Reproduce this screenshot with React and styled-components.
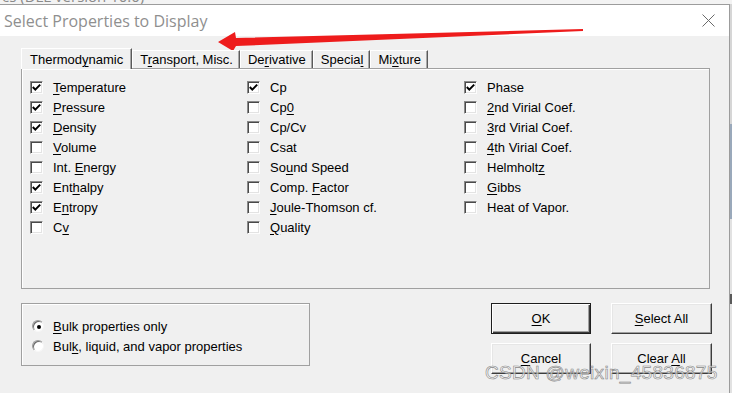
import styled, { createGlobalStyle } from 'styled-components';

const GlobalStyle = createGlobalStyle`
  body {
    margin: 0;
    background: #f0f0f0;
    font-family: "Liberation Sans", Arial, sans-serif;
  }
`;

const Screen = styled.div`
  position: relative;
  width: 732px;
  height: 393px;
  overflow: hidden;
  display: flex;
  flex-direction: column;
  background: #ededed;
`;

const BehindTitle = styled.div`
  height: 4px;
  overflow: hidden;
  padding-left: 2px;
  background: #f3f3f3;
  font-family: "Open Sans", sans-serif;
  font-size: 15px;
  line-height: 20px;
  color: #8a8a8a;
  span {
    display: block;
    margin-top: -14px;
  }
`;

const Main = styled.div`
  flex: 1;
  display: flex;
`;

const Dialog = styled.div`
  width: 729px;
  border-top: 1px solid #9c9c9c;
  border-right: 1px solid #9c9c9c;
  background: #f0f0f0;
  display: flex;
  flex-direction: column;
`;

const Outside = styled.div`
  flex: 1;
  background: linear-gradient(
    to bottom,
    #d6d6d6 0 120px,
    #9aa9bb 120px 215px,
    #e2e2e2 215px 290px,
    #5a5a5a 290px 300px,
    #e2e2e2 300px
  );
`;

const TitleBar = styled.div`
  height: 31px;
  background: #fff;
  display: flex;
  align-items: center;
  justify-content: space-between;
  padding: 0 14px 0 4px;
`;

const Title = styled.div`
  font-family: "Open Sans", sans-serif;
  font-size: 16px;
  color: #8f8f8f;
  margin-top: 1px;
`;

const Body = styled.div`
  padding: 12px 19px 0 21px;
`;

const TabStrip = styled.div`
  display: flex;
  align-items: flex-end;
  height: 20px;
  position: relative;
  z-index: 1;
`;

const Tab = styled.div`
  box-sizing: border-box;
  height: ${(p) => (p.$active ? '21px' : '18px')};
  margin-bottom: ${(p) => (p.$active ? '-1px' : '0')};
  padding: ${(p) => (p.$active ? '3px 8px 0 8px' : '1px 6px 0 7px')};
  background: #f0f0f0;
  border-top: 1px solid #fff;
  border-left: 1px solid #fff;
  border-right: 1px solid #5a5a5a;
  box-shadow: inset -1px 0 #a8a8a8;
  font-size: 13px;
  line-height: 15px;
  color: #000;
  white-space: nowrap;
`;

const Key = styled.span`
  text-decoration: underline;
  text-underline-offset: 2px;
`;

const Panel = styled.div`
  box-sizing: border-box;
  height: 221px;
  border: 1px solid #a0a0a0;
  box-shadow: inset 1px 1px #fff;
  display: grid;
  grid-auto-flow: column;
  grid-template-columns: 217px 217px 1fr;
  grid-template-rows: repeat(8, 20px);
  padding: 8px 0 0 8px;
`;

const CheckRow = styled.label`
  display: flex;
  align-items: center;
  gap: 10px;
  font-size: 13px;
  color: #000;
  white-space: nowrap;
`;

const Box = styled.span`
  box-sizing: border-box;
  width: 13px;
  height: 13px;
  background: #fff;
  border: 1px solid;
  border-color: #8a8a8a #fdfdfd #fdfdfd #8a8a8a;
  box-shadow: inset 1px 1px #4a4a4a, inset -1px -1px #e3e3e3;
  display: flex;
  align-items: center;
  justify-content: center;
`;

const BottomRow = styled.div`
  display: flex;
  justify-content: space-between;
  align-items: flex-start;
  margin-top: 14px;
  margin-right: -2px;
`;

const GroupBox = styled.div`
  box-sizing: border-box;
  width: 289px;
  height: 63px;
  border: 1px solid #a0a0a0;
  box-shadow: inset 1px 1px #fff;
  padding: 12px 0 0 10px;
`;

const RadioRow = styled.label`
  display: flex;
  align-items: center;
  gap: 9px;
  height: 20px;
  font-size: 13px;
  color: #000;
  white-space: nowrap;
`;

const Radio = styled.span`
  box-sizing: border-box;
  width: 12px;
  height: 12px;
  border-radius: 50%;
  background: #fff;
  border: 1px solid;
  border-color: #9a9a9a #f6f6f6 #f6f6f6 #9a9a9a;
  box-shadow: inset 1px 1px #6a6a6a;
  display: flex;
  align-items: center;
  justify-content: center;
  &::after {
    content: '';
    width: 4px;
    height: 4px;
    border-radius: 50%;
    background: ${(p) => (p.$on ? '#000' : 'transparent')};
    margin: 1px 0 0 1px;
  }
`;

const ButtonGrid = styled.div`
  display: grid;
  grid-template-columns: 100px 101px;
  grid-auto-rows: 31px;
  column-gap: 20px;
  row-gap: 9px;
`;

const Button = styled.button`
  box-sizing: border-box;
  background: #f0f0f0;
  font-family: "Liberation Sans", Arial, sans-serif;
  font-size: 13px;
  color: #000;
  padding: 0;
  border: 1px solid;
  border-color: ${(p) => (p.$default ? '#1e1e1e' : '#fff #3c3c3c #3c3c3c #fff')};
  box-shadow: ${(p) =>
    p.$default
      ? 'inset 1px 1px #fff, inset -1px -1px #3c3c3c, inset -2px -2px #a0a0a0'
      : 'inset -1px -1px #a0a0a0, inset 1px 1px #e6e6e6'};
`;

const Watermark = styled.div`
  position: absolute;
  left: 485px;
  top: 362px;
  font-family: "Liberation Sans", Arial, sans-serif;
  font-size: 19px;
  letter-spacing: 0.3px;
  color: rgba(255, 255, 255, 0.6);
  -webkit-text-stroke: 0.6px #858585;
  white-space: nowrap;
  pointer-events: none;
`;

const Arrow = styled.svg`
  position: absolute;
  left: 215px;
  top: 26px;
  pointer-events: none;
`;

const tabs = [
  ['Thermodynamic', 7],
  ['Transport, Misc.', 1],
  ['Derivative', 2],
  ['Special', 6],
  ['Mixture', 2],
];

const properties = [
  ['Temperature', 0, true],
  ['Pressure', 0, true],
  ['Density', 0, true],
  ['Volume', 0, false],
  ['Int. Energy', 5, false],
  ['Enthalpy', 3, true],
  ['Entropy', 1, true],
  ['Cv', 1, false],
  ['Cp', -1, true],
  ['Cp0', 2, false],
  ['Cp/Cv', -1, false],
  ['Csat', -1, false],
  ['Sound Speed', 2, false],
  ['Comp. Factor', 6, false],
  ['Joule-Thomson cf.', 0, false],
  ['Quality', 0, false],
  ['Phase', -1, true],
  ['2nd Virial Coef.', 0, false],
  ['3rd Virial Coef.', 0, false],
  ['4th Virial Coef.', 0, false],
  ['Helmholtz', 8, false],
  ['Gibbs', 0, false],
  ['Heat of Vapor.', -1, false],
];

// label with one underlined accelerator letter
function Accel({ text, at }) {
  if (at < 0) return <span>{text}</span>;
  return (
    <span>
      {text.slice(0, at)}
      <Key>{text[at]}</Key>
      {text.slice(at + 1)}
    </span>
  );
}

function Check({ on }) {
  return (
    <Box>
      {on && (
        <svg width="9" height="9" viewBox="0 0 9 9">
          <path d="M0.8 4 L3.3 6.6 L8.2 1.6" fill="none" stroke="#000" strokeWidth="2" />
        </svg>
      )}
    </Box>
  );
}

export default function App() {
  return (
    <>
      <GlobalStyle />
      <Screen>
        <BehindTitle>
          <span>cs (DLL version 10.0)</span>
        </BehindTitle>
        <Main>
          <Dialog>
            <TitleBar>
              <Title>Select Properties to Display</Title>
              <svg width="13" height="13" viewBox="0 0 13 13">
                <path d="M0.5 0.5 L12.5 12.5 M12.5 0.5 L0.5 12.5" stroke="#6a6a6a" strokeWidth="1" />
              </svg>
            </TitleBar>
            <Body>
              <TabStrip>
                {tabs.map(([name, at], i) => (
                  <Tab key={name} $active={i === 0}>
                    <Accel text={name} at={at} />
                  </Tab>
                ))}
              </TabStrip>
              <Panel>
                {properties.map(([name, at, on]) => (
                  <CheckRow key={name}>
                    <Check on={on} />
                    <Accel text={name} at={at} />
                  </CheckRow>
                ))}
              </Panel>
              <BottomRow>
                <GroupBox>
                  <RadioRow>
                    <Radio $on />
                    <Accel text="Bulk properties only" at={0} />
                  </RadioRow>
                  <RadioRow>
                    <Radio />
                    <Accel text="Bulk, liquid, and vapor properties" at={3} />
                  </RadioRow>
                </GroupBox>
                <ButtonGrid>
                  <Button $default>
                    <Accel text="OK" at={0} />
                  </Button>
                  <Button>
                    <Accel text="Select All" at={0} />
                  </Button>
                  <Button>
                    <Accel text="Cancel" at={0} />
                  </Button>
                  <Button>
                    <Accel text="Clear All" at={6} />
                  </Button>
                </ButtonGrid>
              </BottomRow>
            </Body>
          </Dialog>
          <Outside />
        </Main>
        <Arrow width="372" height="28" viewBox="0 0 372 28">
          <polygon points="3,16 20,6 21,12 368,3 368,5 21,20 18,25" fill="#ee1c1c" />
        </Arrow>
        <Watermark>CSDN @weixin_45836875</Watermark>
      </Screen>
    </>
  );
}
